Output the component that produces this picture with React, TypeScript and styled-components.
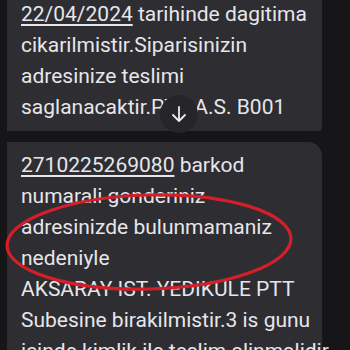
import styled, { createGlobalStyle } from "styled-components";

const Global = createGlobalStyle`
    html, body {
        margin: 0;
        padding: 0;
        background: #161619;
    }
    body {
        font-family: Roboto, "Noto Sans", Arial, sans-serif;
    }
`;

const Screen = styled.div`
    position: relative;
    width: 350px;
    height: 350px;
    overflow: hidden;
    background: #161619;
`;

const Thread = styled.div`
    display: flex;
    flex-direction: column;
    gap: 11px;
    padding-left: 7px;
    margin-top: -9px;
`;

const Bubble = styled.div<{ $first?: boolean }>`
    position: relative;
    width: 315px;
    box-sizing: border-box;
    padding: 8px 14px;
    background: #2d2d32;
    color: #e6e6ea;
    font-size: 21px;
    line-height: 31px;
    border-radius: ${(p) => (p.$first ? "0 0 4px 0" : "0 14px 0 0")};
`;

const Line = styled.div`
    white-space: nowrap;
`;

const Link = styled.span`
    text-decoration: underline;
    text-decoration-thickness: 1.5px;
    text-underline-offset: 3px;
`;

const ScrollButton = styled.div`
    position: absolute;
    left: 160px;
    top: 95px;
    width: 38px;
    height: 38px;
    border-radius: 50%;
    background: #26262a;
    display: flex;
    align-items: center;
    justify-content: center;
`;

const Mark = styled.svg`
    position: absolute;
    left: 0;
    top: 0;
    pointer-events: none;
`;

export default function App() {
    return (
        <Screen>
            <Global />
            <Thread>
                <Bubble $first>
                    <Line>
                        <Link>22/04/2024</Link> tarihinde dagitima
                    </Line>
                    <Line>cikarilmistir.Siparisinizin</Line>
                    <Line>adresinize teslimi</Line>
                    <Line>saglanacaktir.PTT A.S. B001</Line>
                </Bubble>
                <Bubble>
                    <Line>
                        <Link>2710225269080</Link> barkod
                    </Line>
                    <Line>numarali gonderiniz</Line>
                    <Line>adresinizde bulunmamaniz</Line>
                    <Line>nedeniyle</Line>
                    <Line>AKSARAY IST. YEDIKULE PTT</Line>
                    <Line>Subesine birakilmistir.3 is gunu</Line>
                    <Line>icinde kimlik ile teslim alinmalidir</Line>
                </Bubble>
            </Thread>
            <ScrollButton>
                <svg width="16" height="18" viewBox="0 0 16 18" fill="none" stroke="#ececf0" strokeWidth="1.8" strokeLinecap="round" strokeLinejoin="round">
                    <path d="M8 2v14M2 10l6 6 6-6" />
                </svg>
            </ScrollButton>
            <Mark width="350" height="350" viewBox="0 0 350 350">
                <ellipse cx="149" cy="242" rx="142" ry="47" transform="rotate(-1.5 149 242)" fill="none" stroke="#d41f2b" strokeWidth="3.2" />
            </Mark>
        </Screen>
    );
}
